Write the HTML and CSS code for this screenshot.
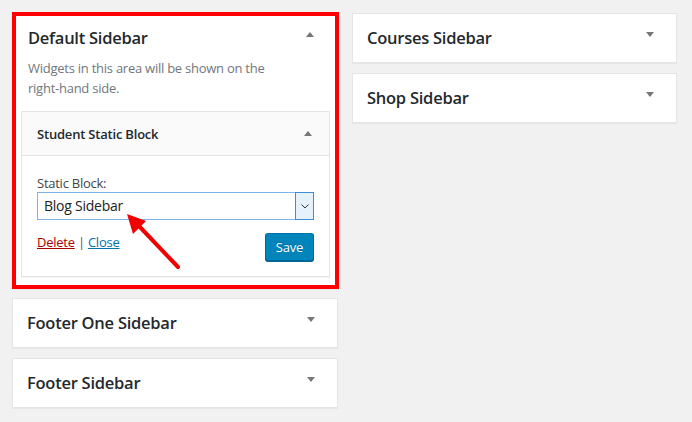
FILE: index.html
```html
<!DOCTYPE html>
<html lang="en">
<head>
    <meta charset="UTF-8">
    <meta name="viewport" content="width=device-width, initial-scale=1.0">
    <title>Widgets</title>
    <link rel="stylesheet" href="styles.css">
</head>
<body>
    <div class="page">
        <div class="col">
            <div class="sidebar highlighted">
                <div class="sidebar-name">
                    <h2>Default Sidebar</h2>
                    <span class="toggle up"></span>
                </div>
                <p class="sidebar-desc">Widgets in this area will be shown on the <span class="nowrap">right-hand</span> side.</p>

                <div class="widget">
                    <div class="widget-top">
                        <h3>Student Static Block</h3>
                        <span class="toggle up"></span>
                    </div>
                    <div class="widget-inside">
                        <label for="block">Static Block:</label>
                        <div class="select" id="block">
                            <span class="select-value">Blog Sidebar</span>
                            <span class="select-btn">
                                <svg width="8" height="5" viewBox="0 0 8 5">
                                    <polyline points="0.5,0.5 4,4 7.5,0.5" fill="none" stroke="#333" stroke-width="1"/>
                                </svg>
                            </span>
                        </div>
                        <div class="widget-control">
                            <div class="links">
                                <a href="#" class="delete">Delete</a> | <a href="#" class="close">Close</a>
                            </div>
                            <button type="button" class="save">Save</button>
                        </div>
                    </div>
                </div>
            </div>

            <div class="sidebar">
                <div class="sidebar-name">
                    <h2>Footer One Sidebar</h2>
                    <span class="toggle down"></span>
                </div>
            </div>

            <div class="sidebar">
                <div class="sidebar-name">
                    <h2>Footer Sidebar</h2>
                    <span class="toggle down"></span>
                </div>
            </div>
        </div>

        <div class="col col-right">
            <div class="sidebar">
                <div class="sidebar-name">
                    <h2>Courses Sidebar</h2>
                    <span class="toggle down"></span>
                </div>
            </div>

            <div class="sidebar">
                <div class="sidebar-name">
                    <h2>Shop Sidebar</h2>
                    <span class="toggle down"></span>
                </div>
            </div>
        </div>
    </div>

    <!-- annotation arrow -->
    <svg class="annotation" width="692" height="422" viewBox="0 0 692 422">
        <line x1="178" y1="267" x2="138" y2="225" stroke="#f20000" stroke-width="4" stroke-linecap="round"/>
        <polygon points="127,214 146,221 133,234" fill="#f20000"/>
    </svg>
</body>
</html>
```

FILE: styles.css
```css
* {
    box-sizing: border-box;
    margin: 0;
    padding: 0;
}

body {
    position: relative;
    font-family: 'Open Sans', 'Segoe UI', Arial, sans-serif;
    font-size: 13px;
    letter-spacing: -0.25px;
    color: #444;
    background-color: #f1f1f1;
    min-height: 422px;
}

.page {
    display: grid;
    grid-template-columns: 327px 325px;
    column-gap: 13px;
    align-items: start;
    padding: 12px;
}

.col-right {
    padding-top: 1px;
}

.sidebar {
    width: 326px;
    background-color: #fff;
    border: 1px solid #e5e5e5;
    box-shadow: 0 1px 1px rgba(0, 0, 0, 0.04);
    margin-bottom: 10px;
}

.col-right .sidebar {
    width: 325px;
}

.sidebar.highlighted {
    width: 327px;
    border: 4px solid #ff0000;
    margin-bottom: 9px;
}

.sidebar-name {
    display: flex;
    justify-content: space-between;
    align-items: flex-start;
    padding: 13px 22px 14px 14px;
}

.highlighted .sidebar-name {
    padding: 11px 21px 10px 12px;
}

h2 {
    font-size: 16.5px;
    font-weight: 600;
    line-height: 21px;
    color: #23282d;
}

.toggle {
    width: 0;
    height: 0;
    margin-top: 5px;
    border-left: 4px solid transparent;
    border-right: 4px solid transparent;
}

.toggle.down {
    border-top: 5px solid #72777c;
}

.toggle.up {
    border-bottom: 5px solid #72777c;
}

.sidebar-desc {
    padding: 0 12px;
    margin-bottom: 13px;
    line-height: 20px;
    color: #72777c;
}

.nowrap {
    white-space: nowrap;
}

.widget {
    margin: 0 5px 8px 5px;
    border: 1px solid #e5e5e5;
    background-color: #fff;
    box-shadow: 0 1px 1px rgba(0, 0, 0, 0.04);
}

.widget-top {
    display: flex;
    justify-content: space-between;
    align-items: center;
    height: 44px;
    padding: 0 17px 0 15px;
    background-color: #fafafa;
    border-bottom: 1px solid #e5e5e5;
}

.widget-top h3 {
    font-size: 13px;
    font-weight: 600;
    letter-spacing: -0.2px;
    color: #23282d;
}

.widget-top .toggle {
    margin-top: 0;
}

.widget-inside {
    padding: 18px 15px 15px;
}

label {
    display: block;
    line-height: 18px;
    color: #444;
}

.select {
    display: flex;
    height: 28px;
    border: 1px solid #7eb4ea;
}

.select-value {
    flex: 1;
    padding-left: 6px;
    font-size: 14px;
    line-height: 26px;
    color: #222;
}

.select-btn {
    display: flex;
    align-items: center;
    justify-content: center;
    width: 19px;
    margin: -1px -1px -1px 0;
    background-color: #e5f1fb;
    border: 1px solid #3c8ddb;
}

.widget-control {
    display: flex;
    justify-content: space-between;
    align-items: flex-start;
    margin-top: 12px;
}

.links {
    line-height: 20px;
    color: #555;
}

.delete {
    color: #a00;
}

.close {
    color: #0073aa;
}

.save {
    margin-top: 1px;
    height: 28px;
    padding: 0 10px;
    font-family: inherit;
    font-size: 13px;
    letter-spacing: inherit;
    line-height: 26px;
    color: #fff;
    background-color: #0085ba;
    border: 1px solid #0073aa;
    border-color: #0073aa #006799 #006799;
    border-radius: 3px;
    box-shadow: 0 1px 0 #006799;
    text-shadow: 0 -1px 1px #006799;
    cursor: pointer;
}

.annotation {
    position: absolute;
    top: 0;
    left: 0;
    pointer-events: none;
}
```
